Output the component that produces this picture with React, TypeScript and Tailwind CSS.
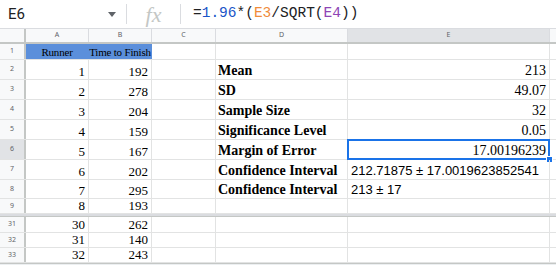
const serif = { fontFamily: '"Liberation Serif", "Times New Roman", serif' };

const cols = [
  { key: 'A', w: 'w-[63px]' },
  { key: 'B', w: 'w-[63px]' },
  { key: 'C', w: 'w-[64px]' },
  { key: 'D', w: 'w-[132px]' },
  { key: 'E', w: 'w-[202px]' },
];

type Row = {
  n: number;
  h: string;
  a?: string;
  b?: string;
  d?: string;
  e?: string;
  eSans?: boolean;
  head?: boolean;
  sel?: boolean;
};

const rows: Row[] = [
  { n: 1, h: 'h-[16px]', a: 'Runner', b: 'Time to Finish', head: true },
  { n: 2, h: 'h-[20px]', a: '1', b: '192', d: 'Mean', e: '213' },
  { n: 3, h: 'h-[20px]', a: '2', b: '278', d: 'SD', e: '49.07' },
  { n: 4, h: 'h-[20px]', a: '3', b: '204', d: 'Sample Size', e: '32' },
  { n: 5, h: 'h-[20px]', a: '4', b: '159', d: 'Significance Level', e: '0.05' },
  { n: 6, h: 'h-[20px]', a: '5', b: '167', d: 'Margin of Error', e: '17.00196239', sel: true },
  { n: 7, h: 'h-[20px]', a: '6', b: '202', d: 'Confidence Interval', e: '212.71875 ± 17.0019623852541', eSans: true },
  { n: 8, h: 'h-[19px]', a: '7', b: '295', d: 'Confidence Interval', e: '213 ± 17', eSans: true },
  { n: 9, h: 'h-[15px]', a: '8', b: '193' },
];

const tail: Row[] = [
  { n: 31, h: 'h-[16px]', a: '30', b: '262' },
  { n: 32, h: 'h-[15px]', a: '31', b: '140' },
  { n: 33, h: 'h-[15px]', a: '32', b: '243' },
];

function SheetRow({ r }: { r: Row }) {
  const num = r.head
    ? 'bg-[#5b8fdb] justify-center text-[11px] tracking-[-0.2px] leading-[14px] px-0 border-[#5b8fdb]'
    : 'justify-end text-[13px] leading-[14px] px-[3px] border-[#e2e3e3]';
  return (
    <div className={`flex ${r.h} border-b border-[#e2e3e3]`}>
      <div
        className={`w-[26px] shrink-0 flex items-center justify-center text-[7px] text-[#5f6368] border-r-2 border-[#c4c7c5] ${
          r.sel ? 'bg-[#e1e3e6]' : 'bg-[#f8f9fa]'
        }`}
      >
        {r.n}
      </div>
      <div
        style={serif}
        className={`w-[63px] shrink-0 flex items-end whitespace-nowrap text-black border-r ${num}`}
      >
        {r.a}
      </div>
      <div
        style={serif}
        className={`w-[63px] shrink-0 flex items-end whitespace-nowrap text-black border-r ${num}`}
      >
        {r.b}
      </div>
      <div className="w-[64px] shrink-0 border-r border-[#e2e3e3]" />
      <div
        style={serif}
        className="w-[132px] shrink-0 flex items-end px-[2px] text-[14px] leading-[17px] font-bold text-black border-r border-[#e2e3e3] whitespace-nowrap"
      >
        {r.d}
      </div>
      <div
        className={`relative w-[202px] shrink-0 flex items-end px-[3px] text-black border-r border-[#e2e3e3] whitespace-nowrap ${
          r.eSans ? 'justify-start text-[13px] leading-[16px]' : 'justify-end text-[14px] leading-[17px]'
        }`}
        style={r.eSans ? { fontFamily: '"Liberation Sans", Arial, sans-serif' } : serif}
      >
        {r.e}
        {r.sel && (
          <>
            <div className="absolute inset-[-1px] border-2 border-[#1a73e8]" />
            <div className="absolute right-[-4px] bottom-[-4px] w-[7px] h-[7px] bg-[#1a73e8] border border-white" />
          </>
        )}
      </div>
      <div className="flex-1" />
    </div>
  );
}

export default function App() {
  return (
    <div className="w-[556px] h-[265px] overflow-hidden bg-white flex flex-col">
      {/* formula bar */}
      <div className="h-[29px] shrink-0 flex items-center border-b border-[#dadce0]">
        <div
          className="w-[126px] flex items-center justify-between pl-[8px] pr-[10px] text-[15px] text-[#202124]"
          style={{ fontFamily: 'Roboto, "Liberation Sans", sans-serif' }}
        >
          <span>E6</span>
          <svg width="8" height="5" viewBox="0 0 8 5">
            <path d="M0 0h8L4 5z" fill="#5f6368" />
          </svg>
        </div>
        <div className="w-px h-[20px] bg-[#dadce0]" />
        <div
          className="w-[53px] flex justify-center text-[22px] italic text-[#c4c7c5]"
          style={serif}
        >
          fx
        </div>
        <div className="w-px h-[20px] bg-[#dadce0]" />
        <div
          className="pl-[12px] text-[14.5px] text-[#202124]"
          style={{ fontFamily: '"Liberation Mono", "DejaVu Sans Mono", monospace' }}
        >
          =<span className="text-[#1a55c8]">1.96</span>*(<span className="text-[#f08c3a]">E3</span>/SQRT(
          <span className="text-[#8e45b5]">E4</span>))
        </div>
      </div>

      {/* column headers */}
      <div className="h-[15px] shrink-0 flex border-b-2 border-[#c4c7c5] text-[7px] text-[#5f6368]">
        <div className="w-[26px] shrink-0 bg-[#f8f9fa] border-r-2 border-[#c4c7c5]" />
        {cols.map((c) => (
          <div
            key={c.key}
            className={`${c.w} shrink-0 flex items-center justify-center border-r border-[#dadce0] ${
              c.key === 'E' ? 'bg-[#e1e3e6]' : 'bg-[#f8f9fa]'
            }`}
          >
            {c.key}
          </div>
        ))}
        <div className="flex-1 bg-[#f8f9fa]" />
      </div>

      {rows.map((r) => (
        <SheetRow key={r.n} r={r} />
      ))}
      <div className="h-[3px] shrink-0 bg-[#dadce0] border-b border-[#c4c7c5]" />
      {tail.map((r) => (
        <SheetRow key={r.n} r={r} />
      ))}
      <div className="flex-1 bg-[#eceff1] border-t border-[#c4c7c5]" />
    </div>
  );
}
